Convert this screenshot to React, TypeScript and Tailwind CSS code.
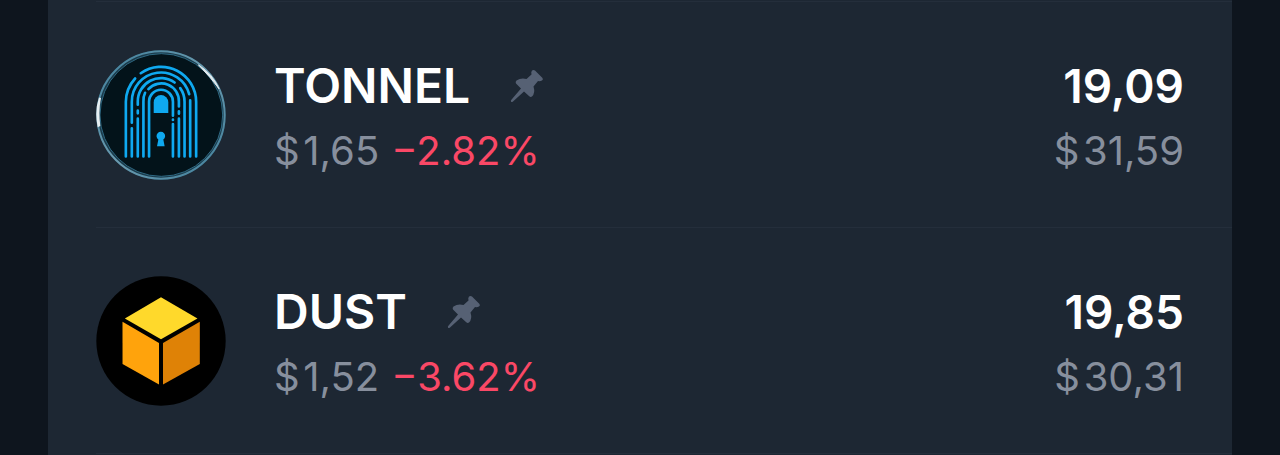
interface Token {
  symbol: string;
  price: string;
  change: string;
  amount: string;
  value: string;
  logo: () => React.ReactNode;
}

function TonnelLogo() {
  return (
    <svg viewBox="31 29 392 392" className="size-[130px] shrink-0" role="img" aria-label="TONNEL">
      <defs>
        <linearGradient id="rim" x1="0" y1="0" x2="1" y2="1">
          <stop offset="0" stopColor="#3f7f9b" />
          <stop offset="0.5" stopColor="#6b9bb0" />
          <stop offset="1" stopColor="#3f7f9b" />
        </linearGradient>
      </defs>
      <circle cx="227" cy="225" r="195" fill="#1b3a4a" />
      <circle cx="227" cy="225" r="192" fill="none" stroke="url(#rim)" strokeWidth="6" />
      <circle cx="228" cy="225" r="185" fill="#03131a" stroke="#2f6a84" strokeWidth="3" />
      <path d="M340 74Q383 102 402 146Q378 112 340 74Z" fill="#e3ebef" stroke="#e3ebef" strokeWidth="3" />
      <path d="M40 172Q26 212 36 262L44 258Q38 212 46 174Z" fill="#e6eef2" />
      <g fill="none" stroke="#0fa9f0" strokeWidth="8" strokeLinecap="round">
        <path d="M121 350V185A106 106 0 0 1 149 115" />
        <path d="M166 99A106 106 0 0 1 333 185V350" />
        <path d="M139 350V265M139 248V185A88 88 0 0 1 312 162M315 181V350" />
        <path d="M157 350V236M157 212V220M157 194V185A70 70 0 0 1 268 127M285 144A70 70 0 0 1 298 185V350" />
        <path d="M174 350V185A53 53 0 0 1 179 158M189 147A53 53 0 0 1 281 185V199M281 214V221M281 236V350" />
        <path d="M191 350V185A36 36 0 0 1 263 185V227M263 239V240M263 252V350" />
      </g>
      <path d="M205 219V187A22 22 0 0 1 249 187V219Z" fill="#0fa9f0" />
      <path d="M215 319L219 299A13 13 0 1 1 234 299L238 319Z" fill="#0fa9f0" />
    </svg>
  );
}

function DustLogo() {
  return (
    <svg viewBox="31 29 392 392" className="size-[130px] shrink-0" role="img" aria-label="DUST">
      <circle cx="227" cy="225" r="195" fill="#000" />
      <path d="M227 93L337 157L227 220L118 157Z" fill="#ffd92b" />
      <path d="M111 167L221 231V356L111 294Z" fill="#ffa30c" />
      <path d="M344 167L233 231V356L344 294Z" fill="#df8206" />
    </svg>
  );
}

function PinIcon() {
  return (
    <svg viewBox="0 0 34 34" className="size-[34px]" fill="#566174" aria-hidden="true">
      <path d="M22 1.5Q23.500 .5 25 1.500L32.500 9Q33.500 10.500 32 11.500Q30 12.500 28 12L23.500 17.500Q25.500 24 22 27.500Q20.500 28.500 19 27L14 22.500L3 32.500Q1.500 33.500 1 32.500Q.6 31.500 1.200 31L11 19.500L6 14.500Q5 13 6.500 11.500Q11 8.500 16.500 10L21.500 5.500Q20.800 3 22 1.500Z" />
    </svg>
  );
}

// \u200a keeps the currency sign slightly apart from the digits
const tokens: Token[] = [
  { symbol: 'TONNEL', price: '$\u200a1,65', change: '−2.82%', amount: '19,09', value: '$\u200a31,59', logo: TonnelLogo },
  { symbol: 'DUST', price: '$\u200a1,52', change: '−3.62%', amount: '19,85', value: '$\u200a30,31', logo: DustLogo },
];

function TokenRow({ symbol, price, change, amount, value, logo: Logo }: Token) {
  return (
    <li className="flex items-center border-t border-[#242e3b] pt-12 pr-12 pb-[47px] last:border-b">
      <Logo />
      <div className="ml-12 flex-1">
        <div className="flex items-center gap-10">
          <span className="text-[48px] leading-[72px] font-semibold text-white">{symbol}</span>
          <PinIcon />
        </div>
        <div className="flex gap-3 text-[40px] leading-[58px]">
          <span className="text-[#878f9d]">{price}</span>
          <span className="text-[#fa4866]">{change}</span>
        </div>
      </div>
      <div className="text-right">
        <div className="text-[46px] leading-[72px] font-semibold text-white">{amount}</div>
        <div className="text-[40px] leading-[58px] text-[#878f9d]">{value}</div>
      </div>
    </li>
  );
}

export default function App() {
  return (
    <main className="min-h-screen bg-[#0e151e] px-12 font-['Inter',sans-serif]">
      <ul className="min-h-screen bg-[#1d2733] pt-px pl-12">
        {tokens.map((token) => (
          <TokenRow key={token.symbol} {...token} />
        ))}
      </ul>
    </main>
  );
}
